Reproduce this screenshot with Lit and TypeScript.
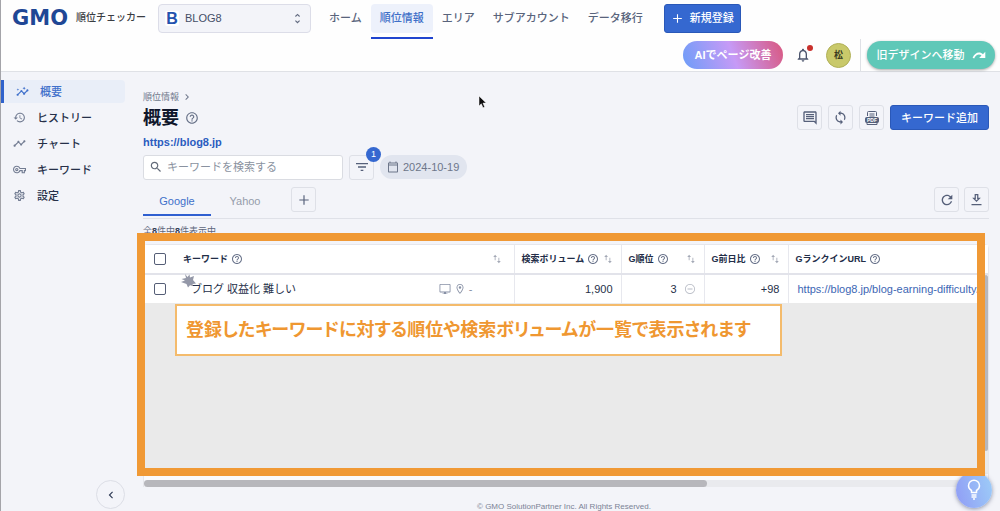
import { LitElement, html, css, svg } from "lit";
import { customElement, property, state } from "lit/decorators.js";
import { classMap } from "lit/directives/class-map.js";

const ICONS: Record<string, string> = {
  insights:
    "M21 8c-1.45 0-2.26 1.44-1.93 2.51l-3.55 3.56c-.3-.09-.74-.09-1.04 0l-2.55-2.55C12.27 10.45 11.46 9 10 9c-1.45 0-2.27 1.44-1.93 2.52l-4.56 4.55C2.44 15.74 1 16.55 1 18c0 1.1.9 2 2 2 1.45 0 2.26-1.44 1.93-2.51l4.55-4.56c.3.09.74.09 1.04 0l2.55 2.55C12.73 16.55 13.54 18 15 18c1.45 0 2.27-1.44 1.93-2.52l3.56-3.55c1.07.33 2.51-.48 2.51-1.93 0-1.1-.9-2-2-2zM15 9l.94-2.07L18 6l-2.06-.93L15 3l-.92 2.07L12 6l2.08.93zM3.5 11L4 9l2-.5L4 8l-.5-2L3 8l-2 .5L3 9z",
  history:
    "M13 3c-4.97 0-9 4.03-9 9H1l3.89 3.89.07.14L9 12H6c0-3.87 3.13-7 7-7s7 3.13 7 7-3.13 7-7 7c-1.93 0-3.68-.79-4.94-2.06l-1.42 1.42C8.27 19.99 10.51 21 13 21c4.97 0 9-4.03 9-9s-4.03-9-9-9zm-1 5v5l4.28 2.54.72-1.21-3.5-2.08V8H12z",
  timeline:
    "M23 8c0 1.1-.9 2-2 2-.18 0-.35-.02-.51-.07l-3.56 3.55c.05.16.07.34.07.52 0 1.1-.9 2-2 2s-2-.9-2-2c0-.18.02-.36.07-.52l-2.55-2.55c-.16.05-.34.07-.52.07s-.36-.02-.52-.07l-4.55 4.56c.05.16.07.33.07.51 0 1.1-.9 2-2 2s-2-.9-2-2 .9-2 2-2c.18 0 .35.02.51.07l4.56-4.55C8.02 9.36 8 9.18 8 9c0-1.1.9-2 2-2s2 .9 2 2c0 .18-.02.36-.07.52l2.55 2.55c.16-.05.34-.07.52-.07s.36.02.52.07l3.55-3.56C19.02 8.35 19 8.18 19 8c0-1.1.9-2 2-2s2 .9 2 2z",
  key: "M22 19h-6v-4h-2.68c-1.14 2.42-3.6 4-6.32 4-3.86 0-7-3.14-7-7s3.14-7 7-7c2.72 0 5.17 1.58 6.32 4H24v6h-2v4zm-4-2h2v-4h2v-2H11.94l-.23-.67C11.01 8.34 9.11 7 7 7c-2.76 0-5 2.24-5 5s2.24 5 5 5c2.11 0 4.01-1.34 4.71-3.33l.23-.67H18v4zM7 15c-1.65 0-3-1.35-3-3s1.35-3 3-3 3 1.35 3 3-1.35 3-3 3zm0-4c-.55 0-1 .45-1 1s.45 1 1 1 1-.45 1-1-.45-1-1-1z",
  settings:
    "M19.43 12.98c.04-.32.07-.64.07-.98 0-.34-.03-.66-.07-.98l2.11-1.65c.19-.15.24-.42.12-.64l-2-3.46c-.09-.16-.26-.25-.44-.25-.06 0-.12.01-.17.03l-2.49 1c-.52-.4-1.08-.73-1.69-.98l-.38-2.65C14.46 2.18 14.25 2 14 2h-4c-.25 0-.46.18-.49.42l-.38 2.65c-.61.25-1.17.59-1.69.98l-2.49-1c-.06-.02-.12-.03-.18-.03-.17 0-.34.09-.43.25l-2 3.46c-.13.22-.07.49.12.64l2.11 1.65c-.04.32-.07.65-.07.98 0 .33.03.66.07.98l-2.11 1.65c-.19.15-.24.42-.12.64l2 3.46c.09.16.26.25.44.25.06 0 .12-.01.17-.03l2.49-1c.52.4 1.08.73 1.69.98l.38 2.65c.03.24.24.42.49.42h4c.25 0 .46-.18.49-.42l.38-2.65c.61-.25 1.17-.59 1.69-.98l2.49 1c.06.02.12.03.18.03.17 0 .34-.09.43-.25l2-3.46c.12-.22.07-.49-.12-.64l-2.11-1.65zm-1.98-1.71c.04.31.05.52.05.73 0 .21-.02.43-.05.73l-.14 1.13.89.7 1.08.84-.7 1.21-1.27-.51-1.04-.42-.9.68c-.43.32-.84.56-1.25.73l-1.06.43-.16 1.13-.2 1.35h-1.4l-.19-1.35-.16-1.13-1.06-.43c-.43-.18-.83-.41-1.23-.71l-.91-.7-1.06.43-1.27.51-.7-1.21 1.08-.84.89-.7-.14-1.13c-.03-.31-.05-.54-.05-.74s.02-.43.05-.73l.14-1.13-.89-.7-1.08-.84.7-1.21 1.27.51 1.04.42.9-.68c.43-.32.84-.56 1.25-.73l1.06-.43.16-1.13.2-1.35h1.39l.19 1.35.16 1.13 1.06.43c.43.18.83.41 1.23.71l.91.7 1.06-.43 1.27-.51.7 1.21-1.07.85-.89.7.14 1.13zM12 8c-2.21 0-4 1.79-4 4s1.79 4 4 4 4-1.79 4-4-1.79-4-4-4zm0 6c-1.1 0-2-.9-2-2s.9-2 2-2 2 .9 2 2-.9 2-2 2z",
  help: "M11 18h2v-2h-2v2zm1-16C6.48 2 2 6.48 2 12s4.48 10 10 10 10-4.48 10-10S17.52 2 12 2zm0 18c-4.41 0-8-3.59-8-8s3.59-8 8-8 8 3.59 8 8-3.59 8-8 8zm0-14c-2.21 0-4 1.79-4 4h2c0-1.1.9-2 2-2s2 .9 2 2c0 2-3 1.75-3 5h2c0-2.25 3-2.5 3-5 0-2.21-1.79-4-4-4z",
  bell: "M12 22c1.1 0 2-.9 2-2h-4c0 1.1.89 2 2 2zm6-6v-5c0-3.07-1.63-5.64-4.5-6.32V4c0-.83-.67-1.5-1.5-1.5s-1.5.67-1.5 1.5v.68C7.64 5.36 6 7.92 6 11v5l-2 2v1h16v-1l-2-2zm-2 1H8v-6c0-2.48 1.51-4.5 4-4.5s4 2.02 4 4.5v6z",
  comment:
    "M21.99 4c0-1.1-.89-2-1.99-2H4c-1.1 0-2 .9-2 2v12c0 1.1.9 2 2 2h14l4 4-.01-18zM20 4v13.17L18.83 16H4V4h16zM6 12h12v2H6zm0-3h12v2H6zm0-3h12v2H6z",
  sync: "M12 4V1L8 5l4 4V6c3.31 0 6 2.69 6 6 0 1.01-.25 1.97-.7 2.8l1.46 1.46C19.54 15.03 20 13.57 20 12c0-4.42-3.58-8-8-8zm0 14c-3.31 0-6-2.69-6-6 0-1.01.25-1.97.7-2.8L5.24 7.74C4.46 8.97 4 10.43 4 12c0 4.42 3.58 8 8 8v3l4-4-4-4v3z",
  refresh:
    "M17.65 6.35C16.2 4.9 14.21 4 12 4c-4.42 0-7.99 3.58-7.99 8s3.57 8 7.99 8c3.73 0 6.84-2.55 7.73-6h-2.08c-.82 2.33-3.04 4-5.65 4-3.31 0-6-2.69-6-6s2.69-6 6-6c1.66 0 3.14.69 4.22 1.78L13 11h7V4l-2.35 2.35z",
  download: "M19 9h-4V3H9v6H5l7 7 7-7zm-8 2V5h2v6h1.17L12 13.17 9.83 11H11zM4 19h16v2H4z",
  search:
    "M15.5 14h-.79l-.28-.27C15.41 12.59 16 11.11 16 9.5 16 5.91 13.09 3 9.5 3S3 5.91 3 9.5 5.91 16 9.5 16c1.61 0 3.09-.59 4.23-1.57l.27.28v.79l5 4.99L20.49 19l-4.99-5zm-6 0C7.01 14 5 11.99 5 9.5S7.01 5 9.5 5 14 7.01 14 9.5 11.99 14 9.5 14z",
  filter: "M10 18h4v-2h-4v2zM3 6v2h18V6H3zm3 7h12v-2H6v2z",
  calendar:
    "M20 3h-1V1h-2v2H7V1H5v2H4c-1.1 0-2 .9-2 2v16c0 1.1.9 2 2 2h16c1.1 0 2-.9 2-2V5c0-1.1-.9-2-2-2zm0 18H4V9h16v12zm0-14H4V5h16v2z",
  plus: "M20 13h-7v7h-2v-7H4v-2h7V4h2v7h7v2z",
  updown: "M12 5.8L15.2 9l1.4-1.4L12 3 7.4 7.6 8.8 9 12 5.8zm0 12.4L8.8 15l-1.4 1.4L12 21l4.6-4.6-1.4-1.4L12 18.2z",
  right: "M8.6 16.6L13.2 12 8.6 7.4 10 6l6 6-6 6z",
  left: "M15.4 7.4L14 6l-6 6 6 6 1.4-1.4L10.8 12z",
  monitor:
    "M21 2H3c-1.1 0-2 .9-2 2v13c0 1.1.9 2 2 2h7v2H7v1h10v-1h-3v-2h7c1.1 0 2-.9 2-2V4c0-1.1-.9-2-2-2zm.3 15H2.7V3.7h18.6V17z",
  pin: "M12 2C8 2 5 5.1 5 9c0 5.2 7 13 7 13s7-7.800 7-13c0-3.900-3-7-7-7zM6.700 9c0-3 2.300-5.300 5.300-5.300s5.300 2.300 5.300 5.300c0 2.900-2.900 7.200-5.300 10.300C9.600 16.300 6.700 11.800 6.700 9zM12 6.500a2.500 2.500 0 1 0 0 5 2.500 2.500 0 1 0 0-5z",
  minus:
    "M7 11.200v1.600h10v-1.600H7zM12 2C6.500 2 2 6.500 2 12s4.500 10 10 10 10-4.500 10-10S17.500 2 12 2zm0 18.400c-4.600 0-8.400-3.800-8.400-8.400S7.400 3.600 12 3.600s8.400 3.800 8.400 8.400-3.800 8.400-8.400 8.400z",
  sort: "M7.500 2L3 7h3.500v8h2V7H12zm9 20l4.500-5h-3.500V9h-2v8H12z",
  forward:
    "M1 16.800C3.500 11.200 7.500 7.800 12 7.800c2.600 0 4.900 1 6.700 2.700L22.800 6.500V17H12.300l4-4c-1.300-1.200-2.600-1.900-4.300-1.900-3.400 0-6.300 2.700-8.300 6.800z",
};

@customElement("ui-icon")
class UiIcon extends LitElement {
  @property() name = "";
  @property({ type: Number }) size = 14;
  static styles = css`
    :host {
      display: inline-flex;
      flex: none;
    }
  `;
  render() {
    return html`<svg width=${this.size} height=${this.size} viewBox="0 0 24 24" fill="currentColor" aria-hidden="true">
      ${svg`<path d=${ICONS[this.name] ?? ""} />`}
    </svg>`;
  }
}

interface Column {
  label: string;
  cls: string;
  sortable: boolean;
}

const COLUMNS: Column[] = [
  { label: "キーワード", cls: "kw", sortable: true },
  { label: "検索ボリューム", cls: "vol", sortable: true },
  { label: "G順位", cls: "rank", sortable: true },
  { label: "G前日比", cls: "diff", sortable: true },
  { label: "GランクインURL", cls: "url", sortable: false },
];

@customElement("app-root")
class AppRoot extends LitElement {
  @state() private engine = "Google";

  static styles = css`
    :host {
      display: flex;
      flex-direction: column;
      min-height: 100vh;
      position: relative;
      box-sizing: border-box;
      border-left: 1px solid #a4a4a9;
      background: #f3f4f9;
      color: #263049;
      font-family: "Liberation Sans", "Noto Sans CJK JP", sans-serif;
      font-size: 11px;
      line-height: 16px;
      overflow: hidden;
    }
    * {
      box-sizing: border-box;
    }
    a {
      text-decoration: none;
      color: inherit;
    }
    button,
    input,
    select {
      font: inherit;
      color: inherit;
      margin: 0;
    }
    button {
      display: inline-flex;
      align-items: center;
      justify-content: center;
      padding: 0;
      border: 0;
      background: none;
      white-space: nowrap;
    }

    /* header */
    .header {
      background: #fefefe;
      border-bottom: 1px solid #dfe1e6;
      flex: none;
    }
    .bar {
      display: flex;
      align-items: center;
      height: 36px;
      padding-left: 11px;
    }
    .logo {
      display: flex;
      align-items: center;
      width: 134px;
      margin-right: 12px;
      white-space: nowrap;
    }
    .logo-mark {
      width: 65px;
      font: bold 21px/24px "DejaVu Sans", sans-serif;
      color: #1f4795;
    }
    .logo-name {
      font-size: 10px;
      font-weight: 500;
      color: #3a3d42;
    }
    .site {
      display: flex;
      align-items: center;
      width: 153px;
      height: 29px;
      padding: 0 6px;
      border: 1px solid #dcdde8;
      border-radius: 4px;
      background: #f3f4f9;
    }
    .site-mark {
      width: 14px;
      border-radius: 2px;
      background: #fff;
      color: #2352ae;
      font-weight: bold;
      font-size: 16px;
      line-height: 15px;
      text-align: center;
    }
    .site select {
      appearance: none;
      flex: 1;
      min-width: 0;
      padding: 0 0 0 6px;
      border: 0;
      background: none;
      color: #444e66;
    }
    .site ui-icon {
      color: #626b80;
    }
    .nav {
      display: flex;
      height: 36px;
      margin: 0 12px 0 9px;
      color: #59647c;
      white-space: nowrap;
      font-weight: 500;
    }
    .nav a {
      height: 29px;
      margin-top: 4px;
      padding: 6px 9px;
      border-radius: 4px;
    }
    .nav .current {
      position: relative;
      background: #edf1fb;
      color: #3e6fc8;
    }
    .nav .current::after {
      content: "";
      position: absolute;
      left: 0;
      right: 0;
      top: 33px;
      height: 2px;
      background: #1f44cf;
    }
    .primary {
      gap: 6px;
      border: 1px solid #2a58b8;
      border-radius: 3px;
      background: #3568d0;
      color: #fff;
      font-weight: 500;
    }
    .new {
      width: 77px;
      height: 29px;
    }
    .tools {
      display: flex;
      align-items: center;
      justify-content: flex-end;
      height: 35px;
      padding: 3px 5px 0 0;
    }
    .ai {
      width: 100px;
      height: 28px;
      border-radius: 14px;
      background: linear-gradient(70deg, #6d9df8, #c69af6 50%, #d9577f);
      color: #fff;
      font-weight: bold;
    }
    .bell {
      position: relative;
      margin-left: 12px;
      color: #4c556d;
    }
    .dot {
      position: absolute;
      top: -2px;
      right: -2px;
      width: 6px;
      height: 6px;
      border-radius: 50%;
      background: #c9302c;
    }
    .avatar {
      width: 25px;
      height: 25px;
      margin-left: 15px;
      border: 1px solid #b0b057;
      border-radius: 50%;
      background: #c9c96a;
      color: #3a3a20;
      font-size: 9px;
      font-weight: bold;
    }
    .rule {
      align-self: stretch;
      width: 1px;
      margin: 0 6px 0 9px;
      background: #dfe1e6;
    }
    .old {
      gap: 7px;
      width: 128px;
      height: 28px;
      border-radius: 14px;
      background: #5fc8b8;
      box-shadow: 0 1px 3px rgba(0, 0, 0, 0.35);
      color: #fff;
      font-weight: 500;
    }

    /* page body */
    .body {
      display: flex;
      flex: 1;
    }
    .side {
      display: flex;
      flex-direction: column;
      gap: 3px;
      width: 124px;
      flex: none;
      padding-top: 8px;
      font-weight: 500;
    }
    .side a {
      display: flex;
      align-items: center;
      gap: 11px;
      height: 23px;
      padding-left: 12px;
    }
    .side a ui-icon {
      color: #727c92;
    }
    .side .current,
    .side .current ui-icon {
      color: #3f70cb;
    }
    .side .current {
      padding-left: 12px;
      border-left: 3px solid #2f62cc;
      border-radius: 0 4px 4px 0;
      background: #e9eef8;
    }
    .collapse {
      width: 29px;
      height: 29px;
      margin: auto 0 2px auto;
      border: 1px solid #dcdee6;
      border-radius: 50%;
      color: #2c3853;
    }
    .main {
      flex: 1;
      min-width: 0;
      display: flex;
      flex-direction: column;
      padding: 19px 11px 0 18px;
    }
    .crumb {
      display: flex;
      align-items: center;
      gap: 2px;
      font-size: 9px;
      line-height: 12px;
      color: #6f788c;
    }
    .row {
      display: flex;
      align-items: center;
    }
    .head {
      margin-top: 2px;
      gap: 6px;
      height: 25px;
    }
    h1 {
      margin: 0;
      font-size: 18px;
      line-height: 24px;
      font-weight: bold;
      color: #10172c;
    }
    .muted {
      color: #667087;
    }
    .spacer {
      flex: 1;
    }
    .square {
      width: 25px;
      height: 25px;
      border: 1px solid #dee0e7;
      border-radius: 3px;
      color: #56607a;
    }
    .add {
      width: 99px;
      height: 25px;
    }
    .domain {
      align-self: flex-start;
      margin-top: 5px;
      line-height: 14px;
      font-weight: bold;
      color: #2b5cbf;
    }
    .filters {
      margin-top: 5px;
      gap: 6px;
      height: 26px;
    }
    .search {
      display: flex;
      align-items: center;
      gap: 4px;
      width: 200px;
      height: 25px;
      padding: 0 5px;
      border: 1px solid #dadce2;
      border-radius: 3px;
      background: #fff;
      color: #626a78;
    }
    .search input {
      flex: 1;
      min-width: 0;
      padding: 0;
      border: 0;
      outline: 0;
      background: none;
    }
    .search input::placeholder {
      color: #8a92a0;
      opacity: 1;
    }
    .filter {
      position: relative;
    }
    .badge {
      position: absolute;
      top: -9px;
      right: -8px;
      width: 15px;
      height: 15px;
      border-radius: 50%;
      background: #3568d0;
      color: #fff;
      font-size: 9px;
      line-height: 15px;
      text-align: center;
    }
    .chip {
      gap: 4px;
      height: 24px;
      padding: 0 8px 0 7px;
      border-radius: 12px;
      background: #e1e5ef;
      color: #6d768a;
    }
    .tabs {
      margin-top: 7px;
      height: 32px;
      align-items: flex-start;
      border-bottom: 1px solid #dfe1e8;
    }
    .tab {
      height: 29px;
      width: 68px;
      border-bottom: 2px solid transparent;
      color: #959cab;
    }
    .tab.current {
      border-color: #2f5fd0;
      color: #3e70ca;
    }
    .plus {
      margin-left: 12px;
    }
    .square + .square {
      margin-left: 0;
    }
    .pair {
      display: flex;
      gap: 5px;
    }
    .count {
      margin-top: 6px;
      font-size: 9px;
      line-height: 12px;
      color: #5d667b;
    }
    .count b {
      color: #323c54;
    }

    /* keyword table */
    .sheet {
      position: relative;
      display: flex;
      flex-direction: column;
      flex: 1;
      margin-top: 7px;
      border: 1px solid #e6e7ec;
      border-bottom: 0;
      border-radius: 5px 5px 0 0;
    }
    table {
      width: 100%;
      table-layout: fixed;
      border-collapse: collapse;
      background: #fff;
      white-space: nowrap;
    }
    th,
    td {
      height: 29px;
      padding: 0 8px 0 7px;
      border-left: 1px solid #e7e8ee;
      text-align: left;
      overflow: hidden;
    }
    th {
      border-bottom: 2px solid #e2e3ea;
      font-size: 9px;
      font-weight: bold;
      color: #222d47;
    }
    .check {
      width: 32px;
      padding: 0 0 0 10px;
    }
    .check,
    .kw {
      border-left: 0;
    }
    .vol {
      width: 107px;
    }
    .rank {
      width: 83px;
    }
    .diff {
      width: 84px;
    }
    .url {
      width: 200px;
    }
    .th {
      display: flex;
      align-items: center;
      gap: 3px;
    }
    .th ui-icon {
      color: #68728a;
    }
    .th .sorter {
      margin-left: auto;
      color: #a4a9b6;
    }
    .kw .th {
      padding-right: 4px;
    }
    td.kw {
      padding-left: 15px;
      padding-right: 41px;
    }
    .num {
      text-align: right;
    }
    .end {
      display: flex;
      align-items: center;
      justify-content: flex-end;
      gap: 7px;
      color: #b8bcc6;
    }
    .val {
      color: #263049;
    }
    .device {
      gap: 3px;
      color: #8790a5;
    }
    td.url {
      padding: 0 0 0 9px;
      color: #3c66b4;
    }
    input[type="checkbox"] {
      appearance: none;
      display: block;
      width: 12px;
      height: 12px;
      border: 1px solid #555e76;
      border-radius: 2px;
      background: #fff;
    }
    .empty {
      display: flex;
      justify-content: flex-end;
      flex: 1;
      background: #eaeaea;
      border-bottom: 6px solid #fafafc;
    }
    .vbar {
      position: relative;
      width: 4px;
      margin: -28px 0 23px;
      border-radius: 3px;
      background: #b7b7bc;
    }
    .hbar {
      height: 7px;
      border-radius: 4px;
      background: #e9eaee;
    }
    .thumb {
      height: 7px;
      border-radius: 4px;
      background: #b7b7bc;
    }
    .frame {
      position: absolute;
      inset: -12px 3px 11px -7px;
      z-index: 3;
      border: 8px solid #f09935;
      pointer-events: none;
    }
    .note {
      position: absolute;
      left: 31px;
      top: 59px;
      z-index: 4;
      margin: 0;
      padding: 12px 29px 12px 9px;
      border: 2px solid #f4bb6c;
      background: #fff;
      color: #ef9731;
      font-size: 18px;
      line-height: 24px;
      font-weight: bold;
      font-feature-settings: "palt";
      white-space: nowrap;
    }
    .splash {
      position: absolute;
      left: 36px;
      top: 29px;
    }
    .footer {
      margin-top: 15px;
      margin-right: 4px;
      font-size: 8px;
      line-height: 9px;
      text-align: center;
      color: #7b8396;
    }
    .bulb {
      position: fixed;
      right: 8px;
      bottom: 3px;
      z-index: 2;
      width: 36px;
      height: 36px;
      border-radius: 50%;
      background: linear-gradient(75deg, #909cf5, #9dcdf8);
      box-shadow: 0 1px 4px rgba(40, 50, 90, 0.5);
    }
    .pointer {
      position: absolute;
      left: 477px;
      top: 95px;
      z-index: 5;
    }
  `;

  private renderHeader() {
    return html`<header class="header">
      <div class="bar">
        <a class="logo" href="#"><span class="logo-mark">GMO</span><span class="logo-name">順位チェッカー</span></a>
        <label class="site">
          <span class="site-mark" aria-hidden="true">B</span>
          <select aria-label="サイト">
            <option>BLOG8</option>
          </select>
          <ui-icon name="updown" .size=${13}></ui-icon>
        </label>
        <nav class="nav">
          ${["ホーム", "順位情報", "エリア", "サブアカウント", "データ移行"].map(
            (t) => html`<a href="#" class=${classMap({ current: t === "順位情報" })}>${t}</a>`
          )}
        </nav>
        <button class="primary new"><ui-icon name="plus" .size=${13}></ui-icon>新規登録</button>
      </div>
      <div class="tools">
        <button class="ai">AIでページ改善</button>
        <button class="bell" aria-label="通知"><ui-icon name="bell" .size=${16}></ui-icon><span class="dot"></span></button>
        <button class="avatar">松</button>
        <span class="rule"></span>
        <button class="old">旧デザインへ移動<ui-icon name="forward" .size=${14}></ui-icon></button>
      </div>
    </header>`;
  }

  private renderSide() {
    const items = [
      ["insights", "概要"],
      ["history", "ヒストリー"],
      ["timeline", "チャート"],
      ["key", "キーワード"],
      ["settings", "設定"],
    ];
    return html`<nav class="side">
      ${items.map(
        ([icon, label], i) =>
          html`<a href="#" class=${classMap({ current: i === 0 })}><ui-icon name=${icon} .size=${13}></ui-icon>${label}</a>`
      )}
      <button class="collapse" aria-label="閉じる"><ui-icon name="left" .size=${14}></ui-icon></button>
    </nav>`;
  }

  private renderTable() {
    return html`<div class="sheet">
      <table>
        <thead>
          <tr>
            <th class="check"><input type="checkbox" aria-label="すべて選択" /></th>
            ${COLUMNS.map(
              (c) => html`<th class=${c.cls}>
                <div class="th">
                  ${c.label}<ui-icon name="help" .size=${12}></ui-icon>
                  ${c.sortable ? html`<ui-icon class="sorter" name="sort" .size=${10}></ui-icon>` : ""}
                </div>
              </th>`
            )}
          </tr>
        </thead>
        <tbody>
          <tr>
            <td class="check"><input type="checkbox" aria-label="ブログ 収益化 難しいを選択" /></td>
            <td class="kw">
              <div class="row device">
                <span class="val">ブログ 収益化 難しい</span><span class="spacer"></span>
                <ui-icon name="monitor" .size=${12}></ui-icon><ui-icon name="pin" .size=${12}></ui-icon>-
              </div>
            </td>
            <td class="vol num">1,900</td>
            <td class="rank">
              <div class="end"><span class="val">3</span><ui-icon name="minus" .size=${12}></ui-icon></div>
            </td>
            <td class="diff num">+98</td>
            <td class="url"><a href="#">https://blog8.jp/blog-earning-difficulty/</a></td>
          </tr>
        </tbody>
      </table>
      <div class="empty"><div class="vbar"></div></div>
      <div class="hbar"><div class="thumb" style="width:${(2 / 3) * 100}%"></div></div>
      <svg class="splash" width="17" height="17" viewBox="0 0 17 17" fill="#9498a8" aria-hidden="true">
        <path d="M5 0l2.500 3 2-2.500.5 3L14 2l-1 4 3 3.500-3.500.5.500 2-3-.8-2 2.300L6.500 10 1 8l4-1.500L1.500 5 6 4z" />
      </svg>
      <div class="frame"></div>
      <p class="note">登録したキーワードに対する順位や検索ボリュームが一覧で表示されます</p>
    </div>`;
  }

  render() {
    return html`${this.renderHeader()}
      <div class="body">
        ${this.renderSide()}
        <main class="main">
          <div class="crumb"><a href="#">順位情報</a><ui-icon name="right" .size=${12}></ui-icon></div>
          <div class="row head">
            <h1>概要</h1>
            <ui-icon class="muted" name="help" .size=${14}></ui-icon>
            <span class="spacer"></span>
            <button class="square" aria-label="コメント"><ui-icon name="comment" .size=${16}></ui-icon></button>
            <button class="square" aria-label="同期"><ui-icon name="sync" .size=${15}></ui-icon></button>
            <button class="square" aria-label="PDF">
              <svg width="16" height="16" viewBox="0 0 16 16" fill="none" stroke="currentColor">
                <path d="M3.500 6V2.500a1 1 0 0 1 1-1h7a1 1 0 0 1 1 1V6M5.500 4h5M5.500 6h5M3 12.500v2h10v-2" />
                <rect x="1.500" y="7.500" width="13" height="5" rx="1" fill="currentColor" />
                <text x="8" y="12" font-size="5" font-weight="bold" text-anchor="middle" fill="#fff" stroke="none">PDF</text>
              </svg>
            </button>
            <button class="primary add">キーワード追加</button>
          </div>
          <a class="domain" href="#">https://blog8.jp</a>
          <div class="row filters">
            <label class="search">
              <ui-icon name="search" .size=${14}></ui-icon>
              <input type="text" aria-label="キーワード検索" placeholder="キーワードを検索する" />
            </label>
            <button class="square filter" aria-label="絞り込み">
              <ui-icon name="filter" .size=${16}></ui-icon><span class="badge">1</span>
            </button>
            <button class="chip"><ui-icon name="calendar" .size=${12}></ui-icon>2024-10-19</button>
          </div>
          <div class="row tabs">
            ${["Google", "Yahoo"].map(
              (t) => html`<button
                class=${classMap({ tab: true, current: this.engine === t })}
                @click=${() => (this.engine = t)}
              >
                ${t}
              </button>`
            )}
            <button class="square plus" aria-label="追加"><ui-icon name="plus" .size=${14}></ui-icon></button>
            <span class="spacer"></span>
            <div class="pair">
              <button class="square" aria-label="更新"><ui-icon name="refresh" .size=${16}></ui-icon></button>
              <button class="square" aria-label="ダウンロード"><ui-icon name="download" .size=${15}></ui-icon></button>
            </div>
          </div>
          <div class="count">全<b>8</b>件中<b>8</b>件表示中</div>
          ${this.renderTable()}
          <footer class="footer">© GMO SolutionPartner Inc. All Rights Reserved.</footer>
        </main>
      </div>
      <button class="bulb" aria-label="ヒント">
        <svg width="14" height="22" viewBox="0 0 14 22" fill="none" stroke="#fff" stroke-width="1.500">
          <path d="M4.500 13.500v-2C2.500 10.300 1.500 8.600 1.500 6.700a5.500 5.500 0 0 1 11 0c0 1.900-1 3.600-3 4.800v2zM4.500 16h5M4.500 18h5M6 20h2" />
        </svg>
      </button>
      <svg class="pointer" width="10" height="14" viewBox="0 0 10 14" aria-hidden="true">
        <path d="M1 1v10l2.300-2.200L5 12.800l1.700-.7-1.700-4h3.200z" fill="#0c0c0e" stroke="#fff" stroke-width=".5" />
      </svg>`;
  }
}
